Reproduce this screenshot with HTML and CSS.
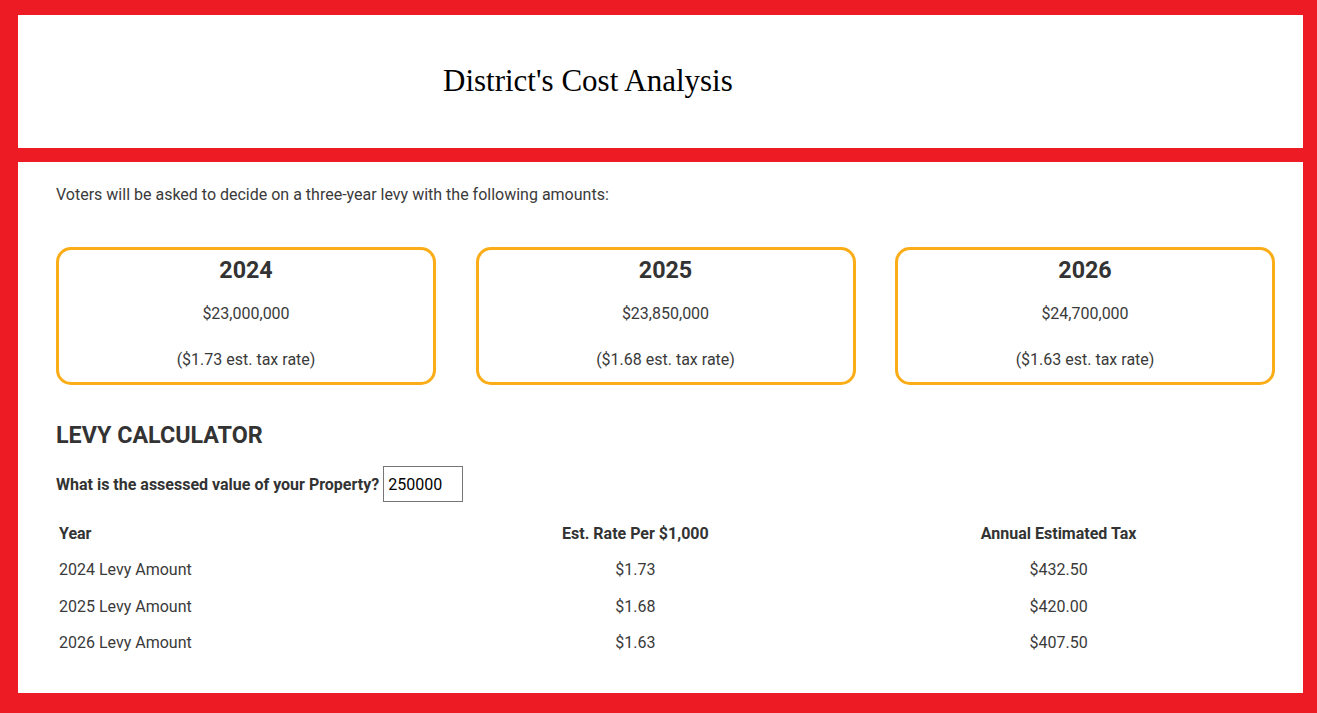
FILE: index.html
```html
<!DOCTYPE html>
<html lang="en">
<head>
<meta charset="utf-8">
<title>District's Cost Analysis</title>
<link rel="stylesheet" href="styles.css">
</head>
<body>
<div class="frame">
  <header class="panel head">
    <h1 class="title">District's Cost Analysis</h1>
  </header>
  <main class="panel content">
    <p class="intro">Voters will be asked to decide on a three-year levy with the following amounts:</p>
    <div class="cards">
      <div class="card">
        <div class="card-year">2024</div>
        <div class="card-amount">$23,000,000</div>
        <div class="card-rate">($1.73 est. tax rate)</div>
      </div>
      <div class="card">
        <div class="card-year">2025</div>
        <div class="card-amount">$23,850,000</div>
        <div class="card-rate">($1.68 est. tax rate)</div>
      </div>
      <div class="card">
        <div class="card-year">2026</div>
        <div class="card-amount">$24,700,000</div>
        <div class="card-rate">($1.63 est. tax rate)</div>
      </div>
    </div>
    <h2 class="calc-title">LEVY CALCULATOR</h2>
    <div class="calc-row">
      <label class="calc-label" for="val">What is the assessed value of your Property?</label>
      <input class="calc-input" id="val" type="text" value="250000">
    </div>
    <table class="levy">
      <thead>
        <tr><th class="c1">Year</th><th class="c2">Est. Rate Per $1,000</th><th class="c3">Annual Estimated Tax</th></tr>
      </thead>
      <tbody>
        <tr><td class="c1">2024 Levy Amount</td><td class="c2">$1.73</td><td class="c3">$432.50</td></tr>
        <tr><td class="c1">2025 Levy Amount</td><td class="c2">$1.68</td><td class="c3">$420.00</td></tr>
        <tr><td class="c1">2026 Levy Amount</td><td class="c2">$1.63</td><td class="c3">$407.50</td></tr>
      </tbody>
    </table>
  </main>
</div>
</body>
</html>
```
FILE: styles.css
```css
html, body {
  margin: 0;
  padding: 0;
}
body {
  background: #ed1c24;
  font-family: Roboto, "Liberation Sans", sans-serif;
  color: #333;
}
.frame {
  padding: 15px 14px 20px 18px;
  display: flex;
  flex-direction: column;
  gap: 14px;
  min-height: 713px;
  box-sizing: border-box;
}
.panel {
  background: #fff;
}
.head {
  height: 133px;
  display: flex;
  align-items: center;
  padding-left: 425px;
  padding-bottom: 2px;
  box-sizing: border-box;
}
.title {
  margin: 0;
  font-family: "Liberation Serif", serif;
  font-weight: normal;
  font-size: 31px;
  color: #000;
}
.content {
  padding: 23px 28px 26px 38px;
  height: 531px;
  box-sizing: border-box;
}
.intro {
  margin: 0;
  font-size: 16px;
  line-height: 20px;
  color: #3a3a3a;
}
.cards {
  margin-top: 42px;
  display: grid;
  grid-template-columns: repeat(3, 380px);
  justify-content: space-between;
}
.card {
  border: 3px solid #fbad18;
  border-radius: 15px;
  height: 138px;
  box-sizing: border-box;
  text-align: center;
  color: #3a3a3a;
}
.card-year {
  font-size: 23.3px;
  font-weight: bold;
  color: #333;
  margin-top: 7px;
  line-height: 26px;
}
.card-amount {
  font-size: 16px;
  margin-top: 21px;
  line-height: 20px;
}
.card-rate {
  font-size: 16px;
  margin-top: 26px;
  line-height: 20px;
}
.calc-title {
  margin: 37px 0 0;
  font-size: 23.3px;
  line-height: 26px;
  font-weight: bold;
  color: #333;
}
.calc-row {
  margin-top: 18px;
  display: flex;
  align-items: center;
  gap: 4px;
}
.calc-label {
  font-size: 16px;
  font-weight: bold;
  color: #333;
}
.calc-input {
  width: 80px;
  height: 36px;
  box-sizing: border-box;
  border: 1px solid #767676;
  font-family: Roboto, "Liberation Sans", sans-serif;
  font-size: 16px;
  padding: 0 4px;
  color: #000;
}
.levy {
  margin-top: 13px;
  width: 1218px;
  border-collapse: collapse;
  font-size: 16px;
  color: #3a3a3a;
}
.levy th, .levy td {
  padding: 0 3px;
  height: 36.5px;
}
.levy th {
  font-weight: bold;
  color: #333;
}
.c1 { width: 371px; text-align: left; }
.c2 { width: 416px; text-align: center; }
.c3 { width: 431px; text-align: center; }
```
